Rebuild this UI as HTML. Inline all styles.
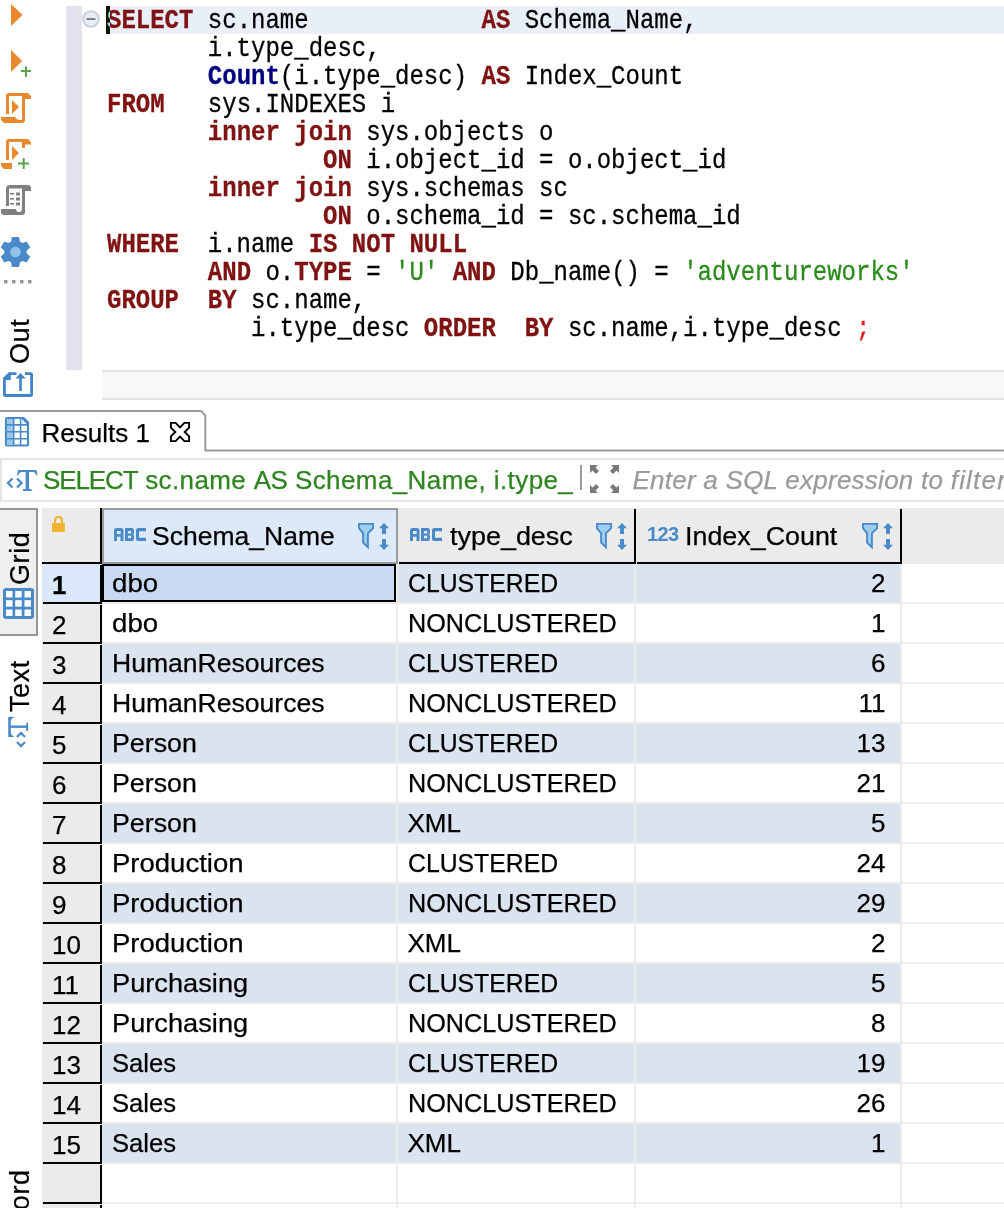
<!DOCTYPE html>
<html><head><meta charset="utf-8">
<style>
*{margin:0;padding:0;box-sizing:border-box}
html,body{width:1004px;height:1208px;overflow:hidden;background:#fff;position:relative}
.abs{position:absolute}
.code{position:absolute;left:106.5px;top:6.5px;-webkit-text-stroke:0.3px currentColor;font-family:"Liberation Mono",monospace;font-size:27.5px;line-height:28px;white-space:pre;color:#000;transform:scaleX(0.87273);transform-origin:0 0}
.code .l{height:28px}
.k{color:#7f1212;font-weight:bold}
.f{color:#00007f;font-weight:bold}
.s{color:#2a8a1a}
.r{color:#e02020}
.sans{font-family:"Liberation Sans",sans-serif;-webkit-text-stroke:0.25px currentColor}
.vt{position:absolute;font-family:"Liberation Sans",sans-serif;-webkit-text-stroke:0.2px #000;font-size:27px;letter-spacing:0.6px;color:#000;transform:rotate(-90deg);transform-origin:0 0;white-space:nowrap;line-height:30px}
.row{position:absolute;left:0;width:1004px;height:40px}
.rh{position:absolute;left:42px;width:60px;height:40px;background:#ebebeb}
.rh .bl{position:absolute;left:1px;top:38px;width:59px;height:2px;background:#000}
.rh .vl{position:absolute;left:58px;top:1px;width:2px;height:37px;background:#000}
.rh .n{position:absolute;-webkit-text-stroke:0.25px #000;left:10px;width:48px;top:0.5px;height:38px;text-align:left;font-family:"Liberation Sans",sans-serif;font-size:26px;line-height:40px;color:#000}
.c{position:absolute;top:0;height:38px;-webkit-text-stroke:0.25px #000;font-family:"Liberation Sans",sans-serif;font-size:26px;line-height:39px;color:#000;white-space:nowrap}
.c1{left:102px;width:294px;padding-left:10px}
.c2{left:398px;width:236px;padding-left:9.5px}
.c3{left:636px;width:264px;padding-right:14.5px;text-align:right}
.gh{position:absolute;height:2px;background:#ececec}
.gv{position:absolute;width:2px;background:#ececec}
</style></head><body>

<!-- left toolbar -->
<svg class="abs" style="left:0;top:0" width="40" height="400" viewBox="0 0 40 400">
  <!-- run -->
  <path d="M11 4 L22.5 15 L11 26 Z" fill="#e8892f"/>
  <!-- run + -->
  <path d="M11 50 L22.2 61 L11 72 Z" fill="#e8892f"/>
  <path d="M21 71 H31 M26 66.5 V77" stroke="#56a548" stroke-width="2"/>
  <!-- script -->
  <g fill="#e8892f">
    <path d="M6 96 Q6 93 9 93 L28 93 L31 96 L31 99 L25 99 L25 96 L9 96 L9 114 L6 114 Z"/>
    <rect x="22" y="95" width="3" height="26"/>
    <path d="M1 117 L15 117 L18 120 L22 120 L22 117 L25 117 L25 121 L23 123 L4 123 L1 120 Z"/>
    <path d="M12 100 L19 107 L12 114 Z"/>
  </g>
  <!-- script + -->
  <g fill="#e8892f">
    <path d="M6 142 Q6 139 9 139 L28 139 L31 142 L31 144.5 L25 144.5 L25 148 L22 148 L22 142 L9 142 L9 160 L6 160 Z"/>
    <path d="M1 163 L12 163 L12 169 L4 169 L1 166 Z"/>
    <path d="M12 146 L19 153 L12 160 Z"/>
  </g>
  <path d="M18 163.5 H29 M23.7 158 V169" stroke="#56a548" stroke-width="2"/>
  <!-- gray scroll -->
  <g fill="#808080">
    <path d="M6 189 Q6 185 10 185 L28 185 Q31 185 31 188 L31 191 L25 191 L25 188.5 L9 188.5 L9 206 L6 206 Z"/>
    <rect x="22" y="187" width="3" height="24"/>
    <path d="M1 209 L16 209 Q16 212 19 212 Q22 212 22 209 L25 209 L25 212 Q25 215 22 215 L4 215 Q1 215 1 212 Z"/>
    <rect x="10" y="193" width="4" height="1.6"/><rect x="16" y="192.5" width="4" height="3"/>
    <rect x="10" y="198" width="4" height="1.6"/><rect x="16" y="197.5" width="4" height="3"/>
    <rect x="10" y="203" width="4" height="1.6"/><rect x="16" y="202.5" width="4" height="3"/>
  </g>
  <!-- gear -->
  <g transform="translate(15.5 252)">
    <circle r="11.2" fill="#4a8ac9"/><path fill="#4a8ac9" transform="rotate(0)" d="M-3.6 -15 L3.6 -15 L4.6 -9 L-4.6 -9 Z"/><path fill="#4a8ac9" transform="rotate(60)" d="M-3.6 -15 L3.6 -15 L4.6 -9 L-4.6 -9 Z"/><path fill="#4a8ac9" transform="rotate(120)" d="M-3.6 -15 L3.6 -15 L4.6 -9 L-4.6 -9 Z"/><path fill="#4a8ac9" transform="rotate(180)" d="M-3.6 -15 L3.6 -15 L4.6 -9 L-4.6 -9 Z"/><path fill="#4a8ac9" transform="rotate(240)" d="M-3.6 -15 L3.6 -15 L4.6 -9 L-4.6 -9 Z"/><path fill="#4a8ac9" transform="rotate(300)" d="M-3.6 -15 L3.6 -15 L4.6 -9 L-4.6 -9 Z"/>
    <circle r="5.3" fill="#93c2ea"/>
  </g>
  <!-- dots -->
  <g fill="#9b978f">
    <rect x="4" y="280" width="3.5" height="3.5"/><rect x="12" y="280" width="3.5" height="3.5"/>
    <rect x="20" y="280" width="3.5" height="3.5"/><rect x="28" y="280" width="3.5" height="3.5"/>
  </g>
  <!-- output icon -->
  <path d="M16.5 373.6 H9.5 L4.4 378.7 V394.3 Q4.4 395.5 5.6 395.5 H30.4 Q31.6 395.5 31.6 394.3 V374.8 Q31.6 373.6 30.4 373.6 H25" fill="none" stroke="#3f85c8" stroke-width="2.8"/>
  <path d="M3 378.4 L9.3 372.2 L10.8 372.2 L10.8 380 L3 380 Z" fill="#3f85c8"/>
  <path d="M20.5 373 L15.5 378.6 L19.2 378.6 L19.2 391 L21.8 391 L21.8 378.6 L25.8 378.6 Z" fill="#3f85c8"/>
</svg>
<div class="vt" style="left:5px;top:364px">Out</div>

<!-- editor ruler -->
<div class="abs" style="left:66px;top:6px;width:16px;height:364px;background:#e2e2ef"></div>
<!-- current line -->
<div class="abs" style="left:106px;top:6px;width:898px;height:28px;background:#e9eff9"></div>
<!-- fold icon -->
<svg class="abs" style="left:80px;top:8px" width="22" height="22" viewBox="0 0 22 22">
  <circle cx="11" cy="11" r="7.8" fill="#e9edf3" stroke="#c6ced8" stroke-width="2"/>
  <rect x="6.5" y="10.2" width="9" height="1.8" fill="#6c7686"/>
</svg>

<div class="code"><div class="l"><span class="k">SELECT</span> sc.name            <span class="k">AS</span> Schema_Name,</div><div class="l">       i.type_desc,</div><div class="l">       <span class="f">Count</span>(i.type_desc) <span class="k">AS</span> Index_Count</div><div class="l"><span class="k">FROM</span>   sys.INDEXES i</div><div class="l">       <span class="k">inner join</span> sys.objects o</div><div class="l">               <span class="k">ON</span> i.object_id = o.object_id</div><div class="l">       <span class="k">inner join</span> sys.schemas sc</div><div class="l">               <span class="k">ON</span> o.schema_id = sc.schema_id</div><div class="l"><span class="k">WHERE</span>  i.name <span class="k">IS NOT NULL</span></div><div class="l">       <span class="k">AND</span> o.<span class="k">TYPE</span> = <span class="s">'U'</span> <span class="k">AND</span> Db_name() = <span class="s">'adventureworks'</span></div><div class="l"><span class="k">GROUP</span>  <span class="k">BY</span> sc.name,</div><div class="l">          i.type_desc <span class="k">ORDER</span>  <span class="k">BY</span> sc.name,i.type_desc <span class="r">;</span></div></div>

<!-- cursor -->
<div class="abs" style="left:106px;top:6px;width:3.5px;height:28px;background:#fff;mix-blend-mode:difference"></div>
<!-- horizontal scroll area -->
<div class="abs" style="left:102px;top:370px;width:902px;height:30px;background:#f8f8f8;border-top:2px solid #e4e4e4;border-bottom:2px solid #e4e4e4"></div>

<!-- results tab -->
<svg class="abs" style="left:0;top:408px" width="1004" height="46" viewBox="0 0 1004 46">
  <path d="M0 3 L201 3 L205.3 7.3 L205.3 42.5 L1004 42.5" fill="none" stroke="#9a9a9a" stroke-width="2"/>
</svg>
<svg class="abs" style="left:4px;top:416px" width="27" height="32" viewBox="0 0 27 32">
  <path d="M3 2 L19.5 2 L24 6.5 L24 28.5 Q24 29.5 23 29.5 L3 29.5 Q2 29.5 2 28.5 L2 3 Q2 2 3 2 Z" fill="#fff" stroke="#4a8ac9" stroke-width="2.2" stroke-linejoin="round"/>
  <rect x="3" y="3" width="6" height="26" fill="#9bc7ea"/>
  <path d="M9.7 2 V29.5 M16.6 2 V29.5 M2 8.9 H24 M2 15.8 H24 M2 22.7 H24" stroke="#4a8ac9" stroke-width="1.6"/>
  <path d="M19 2 L24 7 L24 8 L18 8 L18 2 Z" fill="#4a8ac9"/>
  <path d="M18.2 3.5 L18.2 8 L22.6 8 Z" fill="#fff"/>
</svg>
<div class="abs sans" style="left:41.5px;top:416.5px;font-size:26px;line-height:32px;color:#000">Results 1</div>
<svg class="abs" style="left:169px;top:421px" width="22" height="22" viewBox="0 0 22 22">
  <path d="M1.9 1.9 L6.6 1.9 L11 6.3 L15.4 1.9 L20.1 1.9 L20.1 6.6 L15.7 11 L20.1 15.4 L20.1 20.1 L15.4 20.1 L11 15.7 L6.6 20.1 L1.9 20.1 L1.9 15.4 L6.3 11 L1.9 6.6 Z" fill="#fff" stroke="#000" stroke-width="1.9" stroke-linejoin="miter"/>
</svg>

<!-- filter bar -->
<div class="abs" style="left:0px;top:458px;width:1010px;height:44px;border:2px solid #e4e4e4;background:#fff"></div>
<svg class="abs" style="left:6px;top:468px" width="34" height="26" viewBox="0 0 34 26">
  <path d="M6.5 10.5 L2 15 L6.5 19.5 M11 10.5 L15.5 15 L11 19.5" fill="none" stroke="#4a8ac9" stroke-width="2.3"/>
  <path d="M12 2 L30.5 2 L31.5 7.5 L30.5 7.5 Q29 4 27 4 L23 4 L23 21 L25.6 21 L25.6 23 L17 23 L17 21 L19.6 21 L19.6 4 L15.5 4 Q13.5 4 12 7.5 L11 7.5 Z" fill="#4a8ac9"/>
</svg>
<div class="abs sans" style="left:43px;top:464px;font-size:26px;line-height:32px;color:#2f8420;white-space:nowrap;letter-spacing:0.4px"><span style="letter-spacing:-1.1px">SELECT</span> sc.name <span style="letter-spacing:-0.6px">AS</span> Schema_Name, i.type_</div>
<div class="abs" style="left:580px;top:465px;width:1.5px;height:25px;background:#9a9a9a"></div>
<svg class="abs" style="left:589px;top:464px" width="31" height="30" viewBox="0 0 31 30">
  <g fill="#7a7a7a">
    <path d="M1 1 L9 1 L6.5 3.5 L10 7 L7 10 L3.5 6.5 L1 9 Z"/>
    <path d="M30 1 L22 1 L24.5 3.5 L21 7 L24 10 L27.5 6.5 L30 9 Z"/>
    <path d="M1 29 L9 29 L6.5 26.5 L10 23 L7 20 L3.5 23.5 L1 21 Z"/>
    <path d="M30 29 L22 29 L24.5 26.5 L21 23 L24 20 L27.5 23.5 L30 21 Z"/>
  </g>
</svg>
<div class="abs sans" style="left:632.5px;top:463.5px;font-size:26px;line-height:32px;color:#9a9a9a;font-style:italic;white-space:nowrap;letter-spacing:0.25px">Enter a SQL expression to <span style="letter-spacing:1.2px">filter</span> results</div>

<!-- vertical tabs -->
<div class="abs" style="left:-2px;top:508px;width:40px;height:128px;background:#efefef;border:2px solid #979797"></div>
<div class="vt" style="left:5px;top:585px">Grid</div>
<svg class="abs" style="left:3px;top:588px" width="31" height="32" viewBox="0 0 31 32">
  <rect x="0" y="0" width="31" height="31" rx="3" fill="#4a8ac9"/>
  <g fill="#fff">
    <rect x="3" y="3" width="6.5" height="6.5"/><rect x="12.2" y="3" width="6.5" height="6.5"/><rect x="21.5" y="3" width="6.5" height="6.5"/>
    <rect x="3" y="12.2" width="6.5" height="6.5"/><rect x="12.2" y="12.2" width="6.5" height="6.5"/><rect x="21.5" y="12.2" width="6.5" height="6.5"/>
    <rect x="3" y="21.5" width="6.5" height="6.5"/><rect x="12.2" y="21.5" width="6.5" height="6.5"/><rect x="21.5" y="21.5" width="6.5" height="6.5"/>
  </g>
</svg>
<div class="vt" style="left:5px;top:712px">Text</div>
<svg class="abs" style="left:0px;top:710px" width="40" height="45" viewBox="0 0 40 45">
  <path d="M8.2 7 L14 6.8 L14 7.6 Q11 8.6 10.8 11.5 L10.8 22.5 Q11 25.3 14 26.4 L14 27.1 L8.2 26.9 Z" fill="#4a8ac9"/>
  <rect x="10" y="15.5" width="17.5" height="2.4" fill="#4a8ac9"/>
  <rect x="26.2" y="12.7" width="1.9" height="8.2" fill="#4a8ac9"/>
  <path d="M17 27 L21 23 L25 27 M17 32 L21 36 L25 32" fill="none" stroke="#4a8ac9" stroke-width="2.3"/>
</svg>
<div class="vt" style="left:5px;top:1260px">Record</div>

<!-- grid header -->
<div class="abs" style="left:0;top:500px;width:1004px;height:2px;background:#e6e6e6"></div>
<div class="abs" style="left:42px;top:508px;width:962px;height:56px;background:#ebebeb"></div>
<svg class="abs" style="left:51px;top:514px" width="16" height="20" viewBox="0 0 16 20">
  <path d="M4.05 9.5 L4.05 6.5 Q4.05 2.95 7.55 2.95 Q11.05 2.95 11.05 6.5 L11.05 9.5" fill="none" stroke="#f2b42e" stroke-width="2.1"/>
  <rect x="1" y="9.1" width="12.9" height="8.8" fill="#f2b42e"/>
</svg>
<div class="abs" style="left:100px;top:508px;width:2px;height:56px;background:#000"></div>
<div class="abs" style="left:42px;top:562px;width:60px;height:2px;background:#000"></div>
<!-- schema header selected -->
<div class="abs" style="left:102px;top:508px;width:296px;height:56px;background:#dce9fb;border:2px solid #9a9a9a"></div>
<div class="abs" style="left:634px;top:509px;width:2px;height:55px;background:#000"></div>
<div class="abs" style="left:399px;top:562px;width:237px;height:2px;background:#000"></div>
<div class="abs" style="left:637px;top:562px;width:265px;height:2px;background:#000"></div>
<div class="abs" style="left:900px;top:509px;width:2px;height:55px;background:#000"></div>

<svg class="abs" style="left:114px;top:528px" width="33" height="13" viewBox="0 0 33 13"><path fill="#4a8ac9" fill-rule="evenodd" d="M0 13 V2.5 Q0 0 2.5 0 H7 Q9.5 0 9.5 2.5 V13 H6.5 V8.8 H3 V13 Z M2.9 2.9 V6.1 H6.6 V2.9 Z M11 0 H17.5 Q20 0 20 2.5 V4.6 Q20 6.5 18.8 6.5 Q20 6.5 20 8.4 V10.5 Q20 13 17.5 13 H11 Z M13.9 2.9 V5.4 H17.2 V2.9 Z M13.9 7.8 V10.2 H17.2 V7.8 Z M22 2.5 Q22 0 24.5 0 H32 V3.2 H25 V9.8 H32 V13 H24.5 Q22 13 22 10.5 Z"/></svg>
<div class="abs sans" style="left:151.5px;top:516px;font-size:26px;line-height:40px;color:#000;white-space:nowrap"><span style="display:inline-block;transform:scaleX(1.02);transform-origin:0 0">Schema_Name</span></div>
<svg class="abs" style="left:410px;top:528px" width="33" height="13" viewBox="0 0 33 13"><path fill="#4a8ac9" fill-rule="evenodd" d="M0 13 V2.5 Q0 0 2.5 0 H7 Q9.5 0 9.5 2.5 V13 H6.5 V8.8 H3 V13 Z M2.9 2.9 V6.1 H6.6 V2.9 Z M11 0 H17.5 Q20 0 20 2.5 V4.6 Q20 6.5 18.8 6.5 Q20 6.5 20 8.4 V10.5 Q20 13 17.5 13 H11 Z M13.9 2.9 V5.4 H17.2 V2.9 Z M13.9 7.8 V10.2 H17.2 V7.8 Z M22 2.5 Q22 0 24.5 0 H32 V3.2 H25 V9.8 H32 V13 H24.5 Q22 13 22 10.5 Z"/></svg>
<div class="abs sans" style="left:450px;top:516px;font-size:26px;line-height:40px;color:#000;white-space:nowrap"><span style="display:inline-block;transform:scaleX(1.036);transform-origin:0 0">type_desc</span></div>
<div class="abs" style="left:647px;top:523px;font-family:Liberation Sans,sans-serif;font-weight:bold;font-size:20px;line-height:23px;letter-spacing:-0.6px;color:#4a8ac9">123</div>
<div class="abs sans" style="left:684.5px;top:516px;font-size:26px;line-height:40px;color:#000;white-space:nowrap"><span style="display:inline-block;transform:scaleX(1.033);transform-origin:0 0">Index_Count</span></div>
<svg class="abs" style="left:358px;top:523px" width="34" height="28" viewBox="0 0 34 28"><path d="M0.9 0.9 L15.1 0.9 L15.1 5.2 L9.9 10.4 L9.9 24.2 L5.1 19.6 L5.1 10.4 L0.9 5.2 Z" fill="#9fcdee" stroke="#4a8ac9" stroke-width="1.9" stroke-linejoin="miter"/><path d="M21 5.2 L26 0 L31 5.2 L28 5.2 L28 11 L24 11 L24 5.2 Z M24 16 L28 16 L28 21.8 L31 21.8 L26 27 L21 21.8 L24 21.8 Z" fill="#4a8ac9"/></svg>
<svg class="abs" style="left:596px;top:523px" width="34" height="28" viewBox="0 0 34 28"><path d="M0.9 0.9 L15.1 0.9 L15.1 5.2 L9.9 10.4 L9.9 24.2 L5.1 19.6 L5.1 10.4 L0.9 5.2 Z" fill="#9fcdee" stroke="#4a8ac9" stroke-width="1.9" stroke-linejoin="miter"/><path d="M21 5.2 L26 0 L31 5.2 L28 5.2 L28 11 L24 11 L24 5.2 Z M24 16 L28 16 L28 21.8 L31 21.8 L26 27 L21 21.8 L24 21.8 Z" fill="#4a8ac9"/></svg>
<svg class="abs" style="left:862px;top:523px" width="34" height="28" viewBox="0 0 34 28"><path d="M0.9 0.9 L15.1 0.9 L15.1 5.2 L9.9 10.4 L9.9 24.2 L5.1 19.6 L5.1 10.4 L0.9 5.2 Z" fill="#9fcdee" stroke="#4a8ac9" stroke-width="1.9" stroke-linejoin="miter"/><path d="M21 5.2 L26 0 L31 5.2 L28 5.2 L28 11 L24 11 L24 5.2 Z M24 16 L28 16 L28 21.8 L31 21.8 L26 27 L21 21.8 L24 21.8 Z" fill="#4a8ac9"/></svg>

<div class="row" style="top:564px"><div class="abs" style="left:102px;top:0;width:798px;height:38px;background:#dae4f0"></div><div class="gh" style="left:102px;top:38px;width:902px"></div><div class="gv" style="left:396px;top:0;height:40px"></div><div class="gv" style="left:634px;top:0;height:40px"></div><div class="gv" style="left:900px;top:0;height:40px"></div><div class="abs" style="left:102px;top:0;width:294px;height:38px;background:#c7daf2;border:2px solid #000"></div><div class="rh" style="background:#dbe8fb"><div class="bl"></div><div class="vl"></div><div class="n" style="font-weight:bold">1</div></div><div class="c c1"><span style="display:inline-block;transform:scaleX(1.064);transform-origin:0 0">dbo</span></div><div class="c c2"><span style="display:inline-block;transform:scaleX(0.953);transform-origin:0 0">CLUSTERED</span></div><div class="c c3">2</div></div>
<div class="row" style="top:604px"><div class="abs" style="left:102px;top:0;width:798px;height:38px;background:#fff"></div><div class="gh" style="left:102px;top:38px;width:902px"></div><div class="gv" style="left:396px;top:0;height:40px"></div><div class="gv" style="left:634px;top:0;height:40px"></div><div class="gv" style="left:900px;top:0;height:40px"></div><div class="rh" style="background:#ebebeb"><div class="bl"></div><div class="vl"></div><div class="n" style="font-weight:normal">2</div></div><div class="c c1"><span style="display:inline-block;transform:scaleX(1.064);transform-origin:0 0">dbo</span></div><div class="c c2"><span style="display:inline-block;transform:scaleX(0.97);transform-origin:0 0">NONCLUSTERED</span></div><div class="c c3">1</div></div>
<div class="row" style="top:644px"><div class="abs" style="left:102px;top:0;width:798px;height:38px;background:#dae4f0"></div><div class="gh" style="left:102px;top:38px;width:902px"></div><div class="gv" style="left:396px;top:0;height:40px"></div><div class="gv" style="left:634px;top:0;height:40px"></div><div class="gv" style="left:900px;top:0;height:40px"></div><div class="rh" style="background:#ebebeb"><div class="bl"></div><div class="vl"></div><div class="n" style="font-weight:normal">3</div></div><div class="c c1"><span style="display:inline-block;transform:scaleX(1.021);transform-origin:0 0">HumanResources</span></div><div class="c c2"><span style="display:inline-block;transform:scaleX(0.953);transform-origin:0 0">CLUSTERED</span></div><div class="c c3">6</div></div>
<div class="row" style="top:684px"><div class="abs" style="left:102px;top:0;width:798px;height:38px;background:#fff"></div><div class="gh" style="left:102px;top:38px;width:902px"></div><div class="gv" style="left:396px;top:0;height:40px"></div><div class="gv" style="left:634px;top:0;height:40px"></div><div class="gv" style="left:900px;top:0;height:40px"></div><div class="rh" style="background:#ebebeb"><div class="bl"></div><div class="vl"></div><div class="n" style="font-weight:normal">4</div></div><div class="c c1"><span style="display:inline-block;transform:scaleX(1.021);transform-origin:0 0">HumanResources</span></div><div class="c c2"><span style="display:inline-block;transform:scaleX(0.97);transform-origin:0 0">NONCLUSTERED</span></div><div class="c c3">11</div></div>
<div class="row" style="top:724px"><div class="abs" style="left:102px;top:0;width:798px;height:38px;background:#dae4f0"></div><div class="gh" style="left:102px;top:38px;width:902px"></div><div class="gv" style="left:396px;top:0;height:40px"></div><div class="gv" style="left:634px;top:0;height:40px"></div><div class="gv" style="left:900px;top:0;height:40px"></div><div class="rh" style="background:#ebebeb"><div class="bl"></div><div class="vl"></div><div class="n" style="font-weight:normal">5</div></div><div class="c c1"><span style="display:inline-block;transform:scaleX(1.03);transform-origin:0 0">Person</span></div><div class="c c2"><span style="display:inline-block;transform:scaleX(0.953);transform-origin:0 0">CLUSTERED</span></div><div class="c c3">13</div></div>
<div class="row" style="top:764px"><div class="abs" style="left:102px;top:0;width:798px;height:38px;background:#fff"></div><div class="gh" style="left:102px;top:38px;width:902px"></div><div class="gv" style="left:396px;top:0;height:40px"></div><div class="gv" style="left:634px;top:0;height:40px"></div><div class="gv" style="left:900px;top:0;height:40px"></div><div class="rh" style="background:#ebebeb"><div class="bl"></div><div class="vl"></div><div class="n" style="font-weight:normal">6</div></div><div class="c c1"><span style="display:inline-block;transform:scaleX(1.03);transform-origin:0 0">Person</span></div><div class="c c2"><span style="display:inline-block;transform:scaleX(0.97);transform-origin:0 0">NONCLUSTERED</span></div><div class="c c3">21</div></div>
<div class="row" style="top:804px"><div class="abs" style="left:102px;top:0;width:798px;height:38px;background:#dae4f0"></div><div class="gh" style="left:102px;top:38px;width:902px"></div><div class="gv" style="left:396px;top:0;height:40px"></div><div class="gv" style="left:634px;top:0;height:40px"></div><div class="gv" style="left:900px;top:0;height:40px"></div><div class="rh" style="background:#ebebeb"><div class="bl"></div><div class="vl"></div><div class="n" style="font-weight:normal">7</div></div><div class="c c1"><span style="display:inline-block;transform:scaleX(1.03);transform-origin:0 0">Person</span></div><div class="c c2">XML</div><div class="c c3">5</div></div>
<div class="row" style="top:844px"><div class="abs" style="left:102px;top:0;width:798px;height:38px;background:#fff"></div><div class="gh" style="left:102px;top:38px;width:902px"></div><div class="gv" style="left:396px;top:0;height:40px"></div><div class="gv" style="left:634px;top:0;height:40px"></div><div class="gv" style="left:900px;top:0;height:40px"></div><div class="rh" style="background:#ebebeb"><div class="bl"></div><div class="vl"></div><div class="n" style="font-weight:normal">8</div></div><div class="c c1"><span style="display:inline-block;transform:scaleX(1.058);transform-origin:0 0">Production</span></div><div class="c c2"><span style="display:inline-block;transform:scaleX(0.953);transform-origin:0 0">CLUSTERED</span></div><div class="c c3">24</div></div>
<div class="row" style="top:884px"><div class="abs" style="left:102px;top:0;width:798px;height:38px;background:#dae4f0"></div><div class="gh" style="left:102px;top:38px;width:902px"></div><div class="gv" style="left:396px;top:0;height:40px"></div><div class="gv" style="left:634px;top:0;height:40px"></div><div class="gv" style="left:900px;top:0;height:40px"></div><div class="rh" style="background:#ebebeb"><div class="bl"></div><div class="vl"></div><div class="n" style="font-weight:normal">9</div></div><div class="c c1"><span style="display:inline-block;transform:scaleX(1.058);transform-origin:0 0">Production</span></div><div class="c c2"><span style="display:inline-block;transform:scaleX(0.97);transform-origin:0 0">NONCLUSTERED</span></div><div class="c c3">29</div></div>
<div class="row" style="top:924px"><div class="abs" style="left:102px;top:0;width:798px;height:38px;background:#fff"></div><div class="gh" style="left:102px;top:38px;width:902px"></div><div class="gv" style="left:396px;top:0;height:40px"></div><div class="gv" style="left:634px;top:0;height:40px"></div><div class="gv" style="left:900px;top:0;height:40px"></div><div class="rh" style="background:#ebebeb"><div class="bl"></div><div class="vl"></div><div class="n" style="font-weight:normal">10</div></div><div class="c c1"><span style="display:inline-block;transform:scaleX(1.058);transform-origin:0 0">Production</span></div><div class="c c2">XML</div><div class="c c3">2</div></div>
<div class="row" style="top:964px"><div class="abs" style="left:102px;top:0;width:798px;height:38px;background:#dae4f0"></div><div class="gh" style="left:102px;top:38px;width:902px"></div><div class="gv" style="left:396px;top:0;height:40px"></div><div class="gv" style="left:634px;top:0;height:40px"></div><div class="gv" style="left:900px;top:0;height:40px"></div><div class="rh" style="background:#ebebeb"><div class="bl"></div><div class="vl"></div><div class="n" style="font-weight:normal">11</div></div><div class="c c1"><span style="display:inline-block;transform:scaleX(1.047);transform-origin:0 0">Purchasing</span></div><div class="c c2"><span style="display:inline-block;transform:scaleX(0.953);transform-origin:0 0">CLUSTERED</span></div><div class="c c3">5</div></div>
<div class="row" style="top:1004px"><div class="abs" style="left:102px;top:0;width:798px;height:38px;background:#fff"></div><div class="gh" style="left:102px;top:38px;width:902px"></div><div class="gv" style="left:396px;top:0;height:40px"></div><div class="gv" style="left:634px;top:0;height:40px"></div><div class="gv" style="left:900px;top:0;height:40px"></div><div class="rh" style="background:#ebebeb"><div class="bl"></div><div class="vl"></div><div class="n" style="font-weight:normal">12</div></div><div class="c c1"><span style="display:inline-block;transform:scaleX(1.047);transform-origin:0 0">Purchasing</span></div><div class="c c2"><span style="display:inline-block;transform:scaleX(0.97);transform-origin:0 0">NONCLUSTERED</span></div><div class="c c3">8</div></div>
<div class="row" style="top:1044px"><div class="abs" style="left:102px;top:0;width:798px;height:38px;background:#dae4f0"></div><div class="gh" style="left:102px;top:38px;width:902px"></div><div class="gv" style="left:396px;top:0;height:40px"></div><div class="gv" style="left:634px;top:0;height:40px"></div><div class="gv" style="left:900px;top:0;height:40px"></div><div class="rh" style="background:#ebebeb"><div class="bl"></div><div class="vl"></div><div class="n" style="font-weight:normal">13</div></div><div class="c c1"><span style="display:inline-block;transform:scaleX(0.985);transform-origin:0 0">Sales</span></div><div class="c c2"><span style="display:inline-block;transform:scaleX(0.953);transform-origin:0 0">CLUSTERED</span></div><div class="c c3">19</div></div>
<div class="row" style="top:1084px"><div class="abs" style="left:102px;top:0;width:798px;height:38px;background:#fff"></div><div class="gh" style="left:102px;top:38px;width:902px"></div><div class="gv" style="left:396px;top:0;height:40px"></div><div class="gv" style="left:634px;top:0;height:40px"></div><div class="gv" style="left:900px;top:0;height:40px"></div><div class="rh" style="background:#ebebeb"><div class="bl"></div><div class="vl"></div><div class="n" style="font-weight:normal">14</div></div><div class="c c1"><span style="display:inline-block;transform:scaleX(0.985);transform-origin:0 0">Sales</span></div><div class="c c2"><span style="display:inline-block;transform:scaleX(0.97);transform-origin:0 0">NONCLUSTERED</span></div><div class="c c3">26</div></div>
<div class="row" style="top:1124px"><div class="abs" style="left:102px;top:0;width:798px;height:38px;background:#dae4f0"></div><div class="gh" style="left:102px;top:38px;width:902px"></div><div class="gv" style="left:396px;top:0;height:40px"></div><div class="gv" style="left:634px;top:0;height:40px"></div><div class="gv" style="left:900px;top:0;height:40px"></div><div class="rh" style="background:#ebebeb"><div class="bl"></div><div class="vl"></div><div class="n" style="font-weight:normal">15</div></div><div class="c c1"><span style="display:inline-block;transform:scaleX(0.985);transform-origin:0 0">Sales</span></div><div class="c c2">XML</div><div class="c c3">1</div></div>
<div class="row" style="top:1164px"><div class="gh" style="left:102px;top:38px;width:902px"></div><div class="gv" style="left:396px;top:0;height:40px"></div><div class="gv" style="left:634px;top:0;height:40px"></div><div class="gv" style="left:900px;top:0;height:40px"></div><div class="rh"><div class="bl"></div><div class="vl"></div></div></div>
<div class="row" style="top:1204px"><div class="gv" style="left:396px;top:0;height:40px"></div><div class="gv" style="left:634px;top:0;height:40px"></div><div class="gv" style="left:900px;top:0;height:40px"></div><div class="rh"><div class="vl"></div></div></div>

</body></html>
